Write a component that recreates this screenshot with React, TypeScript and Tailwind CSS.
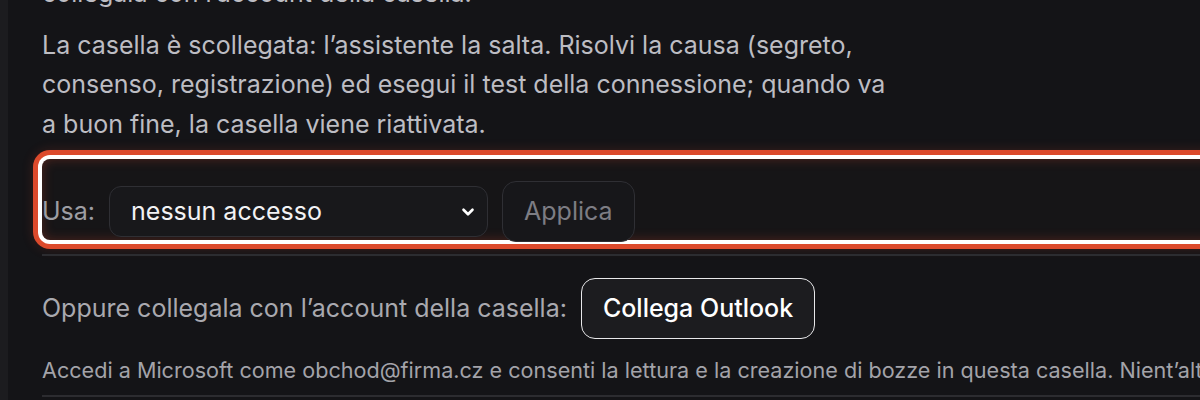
import { ChevronDown } from "lucide-react";

const font = { fontFamily: "Inter, 'Noto Sans', sans-serif" };

export default function App() {
  return (
    <div className="w-[1200px] h-[400px] overflow-hidden bg-[#141417] flex" style={font}>
      <div className="w-[8px] shrink-0 bg-[#1c1c1f]" />
      <div className="flex-1 min-w-0 pl-[34px]">
        <div className="w-[1400px]">
          <p className="mt-[-26px] text-[25px] leading-[39.5px] text-[#bdbdc3]">
            collegala con l’account della casella.
          </p>
          <p className="mt-[12px] max-w-[852px] text-[25px] leading-[39.5px] text-[#bdbdc3]">
            La casella è scollegata: l’assistente la salta. Risolvi la causa (segreto, consenso,
            registrazione) ed esegui il test della connessione; quando va a buon fine, la casella
            viene riattivata.
          </p>

          <div className="mt-[15px] h-[81px] pt-[24px] flex items-center gap-[14px] rounded-[8px] bg-[#161517] shadow-[0_0_0_4px_#ffffff,0_0_0_9px_#dc4a2c,0_0_12px_9px_rgba(220,74,44,0.18),inset_0_0_12px_rgba(220,74,44,0.3)]">
            <span className="text-[25px] text-[#9d9da3]">Usa:</span>
            <div className="relative w-[379px] h-[51px] rounded-[12px] border border-[#2f2f34] bg-[#18181b] flex items-center pl-[21px]">
              <span className="text-[25px] text-[#f2f2f4]">nessun accesso</span>
              <ChevronDown
                className="absolute right-[10px] top-1/2 -translate-y-1/2 text-white"
                size={18}
                strokeWidth={3.5}
              />
            </div>
            <button
              type="button"
              className="h-[61px] px-[21px] rounded-[14px] border border-[#2f2f34] bg-[#17171a] text-[25px] text-[#7d7d84]"
            >
              Applica
            </button>
          </div>

          <div className="mt-[14px] h-[2px] bg-[#2c2c30]" />

          <div className="mt-[22px] flex items-center gap-[14px]">
            <span className="text-[25px] text-[#a9a9af]">
              Oppure collegala con l’account della casella:
            </span>
            <button
              type="button"
              className="h-[61px] px-[21px] rounded-[14px] border-[1.5px] border-[#e8e8ea] bg-[#1c1c1f] text-[25px] font-medium text-white"
            >
              Collega Outlook
            </button>
          </div>

          <p className="mt-[16px] whitespace-nowrap text-[21.6px] leading-[30px] text-[#a3a3a9]">
            Accedi a Microsoft come obchod@firma.cz e consenti la lettura e la creazione di bozze in
            questa casella. Nient’altro.
          </p>

          <div className="mt-[10px] h-[2px] bg-[#2c2c30]" />
        </div>
      </div>
    </div>
  );
}
